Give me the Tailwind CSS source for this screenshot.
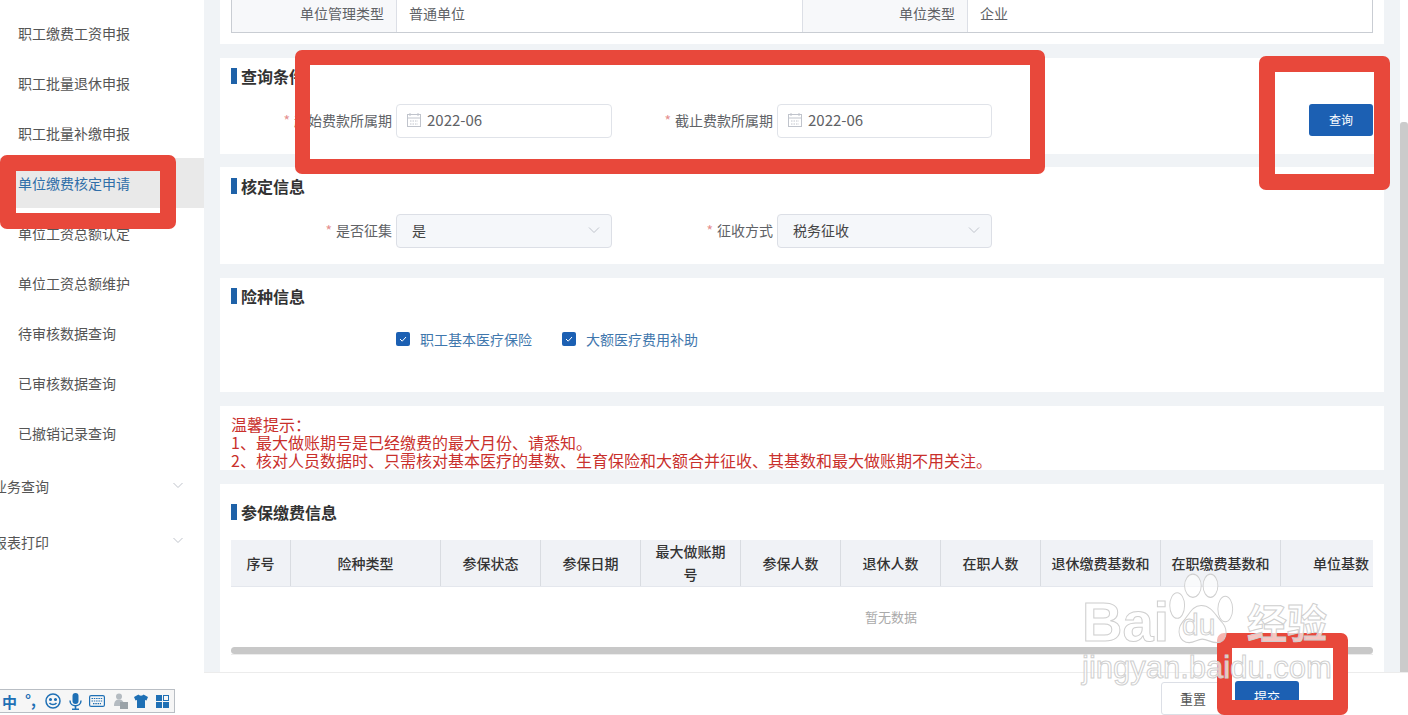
<!DOCTYPE html>
<html lang="zh-CN">

<head>
    <meta charset="UTF-8">
    <title>单位缴费核定申请</title>
    <script src="https://cdn.jsdelivr.net/npm/@tailwindcss/browser@4"></script>
</head>

<body class="bg-white">
    <div class="relative flex w-[1408px] h-[715px] overflow-hidden font-['Noto_Sans_CJK_SC','Liberation_Sans',sans-serif] text-[14px] text-[#606266]">

        <!-- sidebar -->
        <aside class="w-[204px] shrink-0 pt-[8px] bg-white text-[#555]">
            <div class="h-[50px] flex items-center pl-[18px]">职工缴费工资申报</div>
            <div class="h-[50px] flex items-center pl-[18px]">职工批量退休申报</div>
            <div class="h-[50px] flex items-center pl-[18px]">职工批量补缴申报</div>
            <div class="h-[50px] flex items-center pl-[18px] bg-[#e9e9e9] text-[#2f6ea8]">单位缴费核定申请</div>
            <div class="h-[50px] flex items-center pl-[18px]">单位工资总额认定</div>
            <div class="h-[50px] flex items-center pl-[18px]">单位工资总额维护</div>
            <div class="h-[50px] flex items-center pl-[18px]">待审核数据查询</div>
            <div class="h-[50px] flex items-center pl-[18px]">已审核数据查询</div>
            <div class="h-[50px] flex items-center pl-[18px]">已撤销记录查询</div>
            <div class="h-[57px] flex items-center justify-between pr-[20px]">
                <span class="-ml-[7px]">业务查询</span>
                <svg class="w-[12px] h-[12px] -mt-[4px]" viewBox="0 0 12 12" fill="none" stroke="#c0c4cc"><path d="M1.500 4l4.500 4.500L10.500 4" /></svg>
            </div>
            <div class="h-[54px] flex items-center justify-between pr-[20px]">
                <span class="-ml-[7px]">报表打印</span>
                <svg class="w-[12px] h-[12px] -mt-[4px]" viewBox="0 0 12 12" fill="none" stroke="#c0c4cc"><path d="M1.500 4l4.500 4.500L10.500 4" /></svg>
            </div>
        </aside>

        <!-- main -->
        <main class="flex-1 flex flex-col min-w-0">
            <div class="h-[672px] flex bg-[#f0f3f6]">
                <div class="w-[1196px] px-[16px]">

                    <section class="h-[44px] mb-[14px] bg-white px-[11px] overflow-hidden">
                        <div class="flex h-[38px] -mt-[5px] border-x border-b border-[#c9cdd3] items-stretch">
                            <div class="w-[165px] bg-[#f7f8fa] border-r border-[#dcdfe6] flex items-center justify-end pr-[12px]">单位管理类型</div>
                            <div class="w-[406px] flex items-center pl-[12px] border-r border-[#dcdfe6]">普通单位</div>
                            <div class="w-[165px] bg-[#f7f8fa] border-r border-[#dcdfe6] flex items-center justify-end pr-[12px]">单位类型</div>
                            <div class="flex-1 flex items-center pl-[12px]">企业</div>
                        </div>
                    </section>

                    <section class="h-[96px] mb-[13px] bg-white px-[11px] pt-[10px]">
                        <div class="flex items-center h-[16px] text-[16px] font-bold text-[#333]"><span class="w-[6px] h-[16px] bg-[#1f62a8] mr-[4px]"></span>查询条件</div>
                        <div class="flex mt-[20px]">
                            <div class="w-[165px] h-[34px] flex items-center justify-end pr-[4px] pb-[2px]"><span class="text-[#e58f8f] mr-[4px]">*</span>起始费款所属期</div>
                            <div class="w-[216px] h-[34px] border border-[#e0e3e9] rounded-[4px] flex items-center pl-[9px] pb-[2px]">
                                <svg class="w-[16px] h-[16px] mr-[5px]" viewBox="0 0 16 16" fill="none" stroke="#c0c4cc"><rect x="1.500" y="2.500" width="13" height="12" /><path d="M1.500 6h13M4 1v3M12 1v3" /><path d="M4 9h8M4 12h8" stroke-dasharray="1.500 1" /></svg>
                                <span class="text-[15px]">2022-06</span>
                            </div>
                            <div class="w-[165px] h-[34px] flex items-center justify-end pr-[4px] pb-[2px]"><span class="text-[#e58f8f] mr-[4px]">*</span>截止费款所属期</div>
                            <div class="w-[215px] h-[34px] border border-[#e0e3e9] rounded-[4px] flex items-center pl-[9px] pb-[2px]">
                                <svg class="w-[16px] h-[16px] mr-[5px]" viewBox="0 0 16 16" fill="none" stroke="#c0c4cc"><rect x="1.500" y="2.500" width="13" height="12" /><path d="M1.500 6h13M4 1v3M12 1v3" /><path d="M4 9h8M4 12h8" stroke-dasharray="1.500 1" /></svg>
                                <span class="text-[15px]">2022-06</span>
                            </div>
                            <button class="ml-auto w-[64px] h-[32px] rounded-[3px] bg-[#1c60b3] text-white text-[12px]">查询</button>
                        </div>
                    </section>

                    <section class="h-[97px] mb-[14px] bg-white px-[11px] pt-[11px]">
                        <div class="flex items-center h-[16px] text-[16px] font-bold text-[#333]"><span class="w-[6px] h-[16px] bg-[#1f62a8] mr-[4px]"></span>核定信息</div>
                        <div class="flex mt-[20px]">
                            <div class="w-[165px] h-[34px] flex items-center justify-end pr-[4px] pb-[2px]"><span class="text-[#e58f8f] mr-[4px]">*</span>是否征集</div>
                            <div class="w-[216px] h-[34px] border border-[#dcdfe6] rounded-[4px] bg-[#f5f7fa] flex items-center justify-between pl-[15px] pr-[10px] pb-[2px] text-[#444]">
                                <span>是</span>
                                <svg class="w-[14px] h-[14px]" viewBox="0 0 14 14" fill="none" stroke="#c0c4cc"><path d="M2 4.500l5 5 5-5" /></svg>
                            </div>
                            <div class="w-[165px] h-[34px] flex items-center justify-end pr-[4px] pb-[2px]"><span class="text-[#e58f8f] mr-[4px]">*</span>征收方式</div>
                            <div class="w-[215px] h-[34px] border border-[#dcdfe6] rounded-[4px] bg-[#f5f7fa] flex items-center justify-between pl-[15px] pr-[10px] pb-[2px] text-[#444]">
                                <span>税务征收</span>
                                <svg class="w-[14px] h-[14px]" viewBox="0 0 14 14" fill="none" stroke="#c0c4cc"><path d="M2 4.500l5 5 5-5" /></svg>
                            </div>
                        </div>
                    </section>

                    <section class="h-[114px] mb-[14px] bg-white px-[11px] pt-[10px]">
                        <div class="flex items-center h-[16px] text-[16px] font-bold text-[#333]"><span class="w-[6px] h-[16px] bg-[#1f62a8] mr-[4px]"></span>险种信息</div>
                        <div class="flex items-center mt-[24px] ml-[165px] h-[22px] text-[#3f77ad]">
                            <span class="w-[14px] h-[14px] rounded-[2px] bg-[#1c60b3] flex items-center justify-center mr-[10px]">
                                <svg class="w-[10px] h-[10px]" viewBox="0 0 10 10" fill="none" stroke="#fff"><path d="M2 5l2.200 2.200L8 3" /></svg>
                            </span>
                            <span class="mr-[30px]">职工基本医疗保险</span>
                            <span class="w-[14px] h-[14px] rounded-[2px] bg-[#1c60b3] flex items-center justify-center mr-[10px]">
                                <svg class="w-[10px] h-[10px]" viewBox="0 0 10 10" fill="none" stroke="#fff"><path d="M2 5l2.200 2.200L8 3" /></svg>
                            </span>
                            <span>大额医疗费用补助</span>
                        </div>
                    </section>

                    <section class="h-[64px] mb-[14px] bg-white px-[11px] pt-[9px] text-[16px] leading-[18px] text-[#c9302c]">
                        <p>温馨提示：</p>
                        <p>1、最大做账期号是已经缴费的最大月份、请悉知。</p>
                        <p>2、核对人员数据时、只需核对基本医疗的基数、生育保险和大额合并征收、其基数和最大做账期不用关注。</p>
                    </section>

                    <section class="h-[188px] bg-white px-[11px] pt-[20px]">
                        <div class="flex items-center h-[16px] text-[16px] font-bold text-[#333]"><span class="w-[6px] h-[16px] bg-[#1f62a8] mr-[4px]"></span>参保缴费信息</div>
                        <div class="mt-[20px] overflow-hidden">
                            <div class="w-[1320px]">
                                <div class="grid grid-cols-[60px_150px_100px_100px_100px_100px_100px_100px_120px_120px_120px] w-[1170px] h-[47px] bg-[#f0f2f6] border-b border-[#e4e7ed] font-medium text-[#333] text-center">
                                    <div class="border-r border-[#d9dce1] flex items-center justify-center">序号</div>
                                    <div class="border-r border-[#d9dce1] flex items-center justify-center">险种类型</div>
                                    <div class="border-r border-[#d9dce1] flex items-center justify-center">参保状态</div>
                                    <div class="border-r border-[#d9dce1] flex items-center justify-center">参保日期</div>
                                    <div class="border-r border-[#d9dce1] flex items-center justify-center px-[10px] leading-[23px]">最大做账期号</div>
                                    <div class="border-r border-[#d9dce1] flex items-center justify-center">参保人数</div>
                                    <div class="border-r border-[#d9dce1] flex items-center justify-center">退休人数</div>
                                    <div class="border-r border-[#d9dce1] flex items-center justify-center">在职人数</div>
                                    <div class="border-r border-[#d9dce1] flex items-center justify-center">退休缴费基数和</div>
                                    <div class="border-r border-[#d9dce1] flex items-center justify-center">在职缴费基数和</div>
                                    <div class="flex items-center justify-center">单位基数</div>
                                </div>
                                <div class="h-[60px] flex items-center justify-center text-[13px] text-[#aaa]">暂无数据</div>
                            </div>
                        </div>
                        <div class="h-[7px] bg-[#c8c8c8] rounded-full"></div>
                        <div class="border-t border-[#ececec]"></div>
                    </section>
                </div>

                <!-- vertical scrollbar -->
                <div class="w-[8px] bg-white pt-[122px]">
                    <div class="h-full bg-[#cbcbcb] rounded-t-[3px]"></div>
                </div>
            </div>

            <footer class="flex-1 bg-white border-t border-[#ececec] flex justify-end pt-[9px] pr-[183px]">
                <button class="w-[64px] h-[33px] border border-[#dcdfe6] rounded-[3px] text-[13px] text-[#555]">重置</button>
            </footer>
        </main>

        <!-- IME toolbar floating on the desktop -->
        <div class="absolute left-0 top-[689px] w-[175px] h-[24px] bg-[#f6f6f6] border border-[#b9bec4] border-l-0 flex items-center text-[#1f70b5]">
            <span class="ml-[2px] w-[15px] text-[15px] font-bold leading-none">中</span>
            <span class="ml-[8px] w-[12px] text-[15px] font-bold leading-none -mt-[4px]">°,</span>
            <svg class="ml-[8px] w-[16px] h-[16px]" viewBox="0 0 16 16" fill="none" stroke="#1f70b5" stroke-width="1.500"><circle cx="8" cy="8" r="7" /><circle cx="5.500" cy="6.500" r=".8" fill="#1f70b5" /><circle cx="10.500" cy="6.500" r=".8" fill="#1f70b5" /><path d="M4.500 10c1.500 2 5.500 2 7 0" /></svg>
            <svg class="ml-[8px] w-[13px] h-[17px]" viewBox="0 0 13 17" fill="#1f70b5"><rect x="3.500" y="0" width="6" height="11" rx="3" /><path d="M1 7.500c0 7 11 7 11 0" fill="none" stroke="#1f70b5" stroke-width="1.500" /><rect x="5.700" y="13" width="1.600" height="3" /><rect x="3" y="15.500" width="7" height="1.500" /></svg>
            <svg class="ml-[7px] w-[16px] h-[12px]" viewBox="0 0 16 12" fill="none" stroke="#1f70b5" stroke-width="1.200"><rect x=".6" y=".6" width="14.800" height="10.800" rx="1.500" /><path d="M2.500 3.500h11M2.500 6h11M4 8.700h8" stroke-dasharray="1.500 .8" /></svg>
            <svg class="ml-[8px] w-[15px] h-[16px]" viewBox="0 0 15 16" fill="#b4bbc1"><circle cx="6" cy="3.500" r="3" /><path d="M1 13c0-5 2-6.500 5-6.500S11 8 11 13z" /><rect x="7" y="9" width="8" height="7" fill="#9aa2a8" /></svg>
            <svg class="ml-[6px] w-[14px] h-[14px]" viewBox="0 0 14 14" fill="#1f70b5"><path d="M4.500 0.500L0 3l1.500 3.500L3 6v8h8V6l1.500.5L14 3 9.500.5C9 2 5 2 4.500.5z" /></svg>
            <svg class="ml-[8px] w-[13px] h-[13px]" viewBox="0 0 13 13" fill="#1f70b5"><rect width="6" height="6" /><rect x="7.500" y=".5" width="5" height="5" fill="none" stroke="#1f70b5" /><rect y="7" width="6" height="6" /><rect x="7" y="7" width="6" height="6" /></svg>
        </div>

        <!-- red annotation frames -->
        <div class="absolute left-[295px] top-[50px] w-[750px] h-[124px] border-[15px] border-[#e8483b] rounded-[7px]">
            <div class="absolute left-0 right-0 bottom-0 h-[5px] bg-white"></div>
        </div>
        <div class="absolute left-[1259px] top-[56px] w-[131px] h-[134px] border-[16px] border-[#e8483b] rounded-[7px]"></div>
        <div class="absolute left-0 top-[155px] w-[176px] h-[74px] border-[16px] border-[#e8483b] rounded-[7px]"></div>
        <div class="absolute left-[1217px] top-[633px] w-[131px] h-[82px] border-[15px] border-[#e8483b] rounded-[7px] bg-white overflow-hidden">
            <button class="absolute left-[3px] top-[33px] w-[64px] h-[32px] rounded-[3px] bg-[#1c60b3] text-white text-[13px]">提交</button>
        </div>

        <!-- baidu watermark -->
        <div class="absolute left-[1082px] top-[592px] w-[256px] h-[96px] text-white/70 font-['Liberation_Sans',sans-serif] [-webkit-text-stroke:1px_#cfcfcf]">
            <span class="absolute left-0 top-[3px] text-[56px] leading-[54px] font-bold">Bai</span>
            <svg class="absolute left-[85px] -top-[19px] w-[74px] h-[72px]" viewBox="0 0 80 62" preserveAspectRatio="none" fill="#fff" fill-opacity=".6" stroke="#cfcfcf">
                <ellipse cx="28" cy="11" rx="9" ry="10" />
                <ellipse cx="47" cy="11" rx="8" ry="10" />
                <ellipse cx="11" cy="28" rx="8" ry="11" />
                <ellipse cx="63" cy="31" rx="8" ry="11" />
                <path d="M37 28C27 28 24 36 17 42 9 50 14 60 24 60 30 60 33 57 38 57 44 57 47 60 54 60 64 60 67 50 60 43 52 36 48 28 37 28z" />
            </svg>
            <span class="absolute left-[100px] top-[18px] text-[30px] leading-[30px]">du</span>
            <span class="absolute left-[165px] top-[6px] text-[40px] leading-[46px] font-bold font-['Noto_Sans_CJK_SC',sans-serif]">经验</span>
            <span class="absolute left-0 top-[58px] text-[31px] leading-[36px]">jingyan.baidu.com</span>
        </div>
    </div>
</body>

</html>
